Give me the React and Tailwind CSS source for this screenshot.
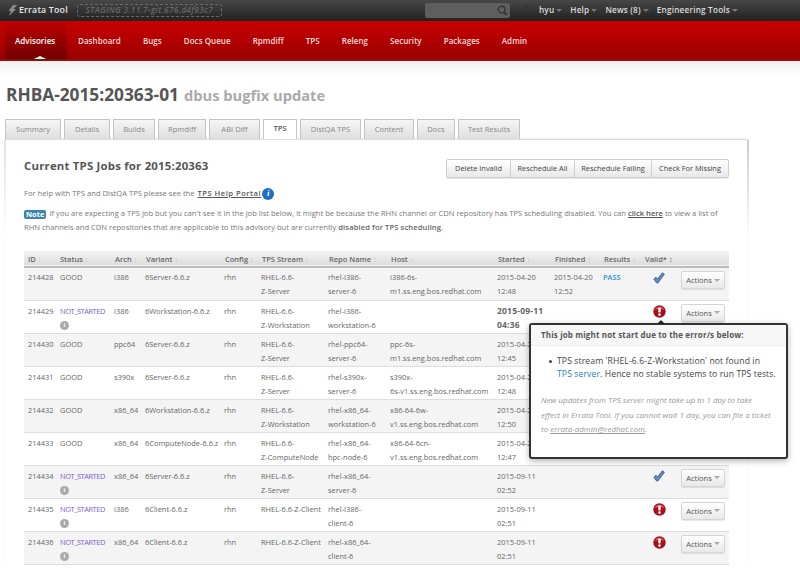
const F = { fontFamily: '"Open Sans", sans-serif' };

const columns = [
  ['ID', 'w-[33px]'], ['Status', 'w-[54px]'], ['Arch', 'w-[31px]'], ['Variant', 'w-[79px]'], ['Config', 'w-[37px]'],
  ['TPS Stream', 'w-[67px]'], ['Repo Name', 'w-[62px]'], ['Host', 'w-[107px]'], ['Started', 'w-[57px]'],
  ['Finished', 'w-[49px]'], ['Results', 'w-[41px]'], ['Valid*', 'w-[35px]'], ['', 'w-[53px]'],
];

const rows = [
  ['214428', 'GOOD', 'i386', '6Server-6.6.z', 'RHEL-6.6-\nZ-Server', 'rhel-i386-\nserver-6', 'i386-6s-\nm1.ss.eng.bos.redhat.com', '2015-04-20\n12:48', '2015-04-20\n12:52', 'PASS', 'ok'],
  ['214429', 'NOT', 'i386', '6Workstation-6.6.z', 'RHEL-6.6-\nZ-Workstation', 'rhel-i386-\nworkstation-6', '', '2015-09-11\n04:36', '', '', 'err', true],
  ['214430', 'GOOD', 'ppc64', '6Server-6.6.z', 'RHEL-6.6-\nZ-Server', 'rhel-ppc64-\nserver-6', 'ppc-6s-\nm1.ss.eng.bos.redhat.com', '2015-04-20\n12:45', '', '', ''],
  ['214431', 'GOOD', 's390x', '6Server-6.6.z', 'RHEL-6.6-\nZ-Server', 'rhel-s390x-\nserver-6', 's390x-\n6s-v1.ss.eng.bos.redhat.com', '2015-04-20\n12:48', '', '', ''],
  ['214432', 'GOOD', 'x86_64', '6Workstation-6.6.z', 'RHEL-6.6-\nZ-Workstation', 'rhel-x86_64-\nworkstation-6', 'x86-64-6w-\nv1.ss.eng.bos.redhat.com', '2015-04-20\n12:50', '', '', ''],
  ['214433', 'GOOD', 'x86_64', '6ComputeNode-6.6.z', 'RHEL-6.6-\nZ-ComputeNode', 'rhel-x86_64-\nhpc-node-6', 'x86-64-6cn-\nv1.ss.eng.bos.redhat.com', '2015-04-20\n12:47', '', '', ''],
  ['214434', 'NOT', 'x86_64', '6Server-6.6.z', 'RHEL-6.6-\nZ-Server', 'rhel-x86_64-\nserver-6', '', '2015-09-11\n02:52', '', '', 'ok'],
  ['214435', 'NOT', 'i386', '6Client-6.6.z', 'RHEL-6.6-Z-Client', 'rhel-i386-\nclient-6', '', '2015-09-11\n02:51', '', '', 'err'],
  ['214436', 'NOT', 'x86_64', '6Client-6.6.z', 'RHEL-6.6-Z-Client', 'rhel-x86_64-\nclient-6', '', '2015-09-11\n02:51', '', '', 'err'],
];

function Caret({ className }) {
  return <span className={'inline-block w-0 h-0 border-x-[3px] border-x-transparent border-t-[3px] align-middle ' + className} />;
}

function Lines({ text }) {
  return text.split('\n').map((l, i) => <div key={i} className="whitespace-nowrap">{l}</div>);
}

function ErrIcon() {
  return (
    <svg width="13" height="13" viewBox="0 0 13 13" className="block">
      <circle cx="6.5" cy="6.5" r="6.2" fill="#a8101c" />
      <path d="M1.5 5 A5.4 5.4 0 0 1 11.5 5 Q6.5 3 1.5 5Z" fill="#d9535c" />
      <rect x="5.3" y="2.4" width="2.4" height="5.2" rx="0.8" fill="#fff" />
      <circle cx="6.5" cy="9.6" r="1.3" fill="#fff" />
    </svg>
  );
}

function OkIcon() {
  return (
    <svg width="12" height="12" viewBox="0 0 12 12" className="block">
      <path d="M0.8 7 L3 5.2 L4.5 7 L9.3 0.8 L11.4 2.2 L5 11 L3.6 11 Z" fill="#5d8cc0" stroke="#2b4f7a" strokeWidth="0.7" strokeLinejoin="round" />
    </svg>
  );
}

function InfoDot() {
  return (
    <span className="mt-[3px] flex h-[9px] w-[9px] items-center justify-center rounded-full bg-[#aaaaaa] text-[6px] font-bold leading-none text-white">i</span>
  );
}

function TopNavItem({ label, active }) {
  return (
    <div className={'flex h-full items-center px-[11px] pt-[2px] text-[8px] font-semibold tracking-[0.05px] text-[#f6dcdc] ' + (active ? 'relative w-[62px] bg-gradient-to-b from-[#bf0000] to-[#720000] pl-[10px] text-white' : '')}>
      {label}
      {active && <span className="absolute bottom-0 left-[29px] h-0 w-0 border-x-[6px] border-b-[3px] border-x-transparent border-b-white" />}
    </div>
  );
}

export default function App() {
  return (
    <div className="relative h-[577px] w-[800px] overflow-hidden bg-white text-[#555555]" style={F}>
      <div className="flex h-[21px] items-center justify-between bg-gradient-to-b from-[#474747] to-[#222222] pl-[8px] pr-[62px]">
        <div className="flex items-center">
          <svg width="9" height="11" viewBox="0 0 9 11"><path d="M5 0 L9 0 L5.5 4 L8 4 L1 11 L3 6 L0.5 6 Z" fill="#8a8a8a" /></svg>
          <span className="ml-[2px] text-[8.8px] font-semibold tracking-[0.2px] text-[#e6e6e6]">Errata Tool</span>
          <span className="ml-[9px] flex h-[13px] w-[145px] items-center justify-center rounded-[3px] border border-dashed border-[#6b6b6b] text-[8.3px] font-semibold italic tracking-[0.3px] text-[#666666]">STAGING 3.11.7-git.676.d4f93c7</span>
        </div>
        <div className="flex items-center">
          <div className="mr-[16px] flex h-[15px] w-[85px] items-center justify-end rounded-[2px] bg-[#5e5e5e] pr-[2px]">
            <svg width="11" height="11" viewBox="0 0 11 11" fill="none" stroke="#353535" strokeWidth="1.4"><circle cx="4.6" cy="4.6" r="3.3" /><path d="M7 7 L10 10" strokeWidth="1.8" /></svg>
          </div>
          <div className="mr-[12px] h-[13px] w-px bg-[#2d2d2d]" />
          {[['hyu', 'mr-[8px]'], ['Help', 'mr-[8px]'], ['News (8)', 'mr-[8px]'], ['Engineering Tools', '']].map(([t, c]) => (
            <span key={t} className={'flex items-center gap-[2px] whitespace-nowrap text-[8.2px] font-semibold tracking-[0.2px] text-[#dddddd] ' + c}>
              {t}<Caret className="border-t-[#777777]" />
            </span>
          ))}
        </div>
      </div>

      <div className="flex h-[40px] border-b-2 border-[#8e1010] bg-gradient-to-b from-[#c80000] to-[#9c0000] pl-[5px]">
        <TopNavItem label="Advisories" active />
        {['Dashboard', 'Bugs', 'Docs Queue', 'Rpmdiff', 'TPS', 'Releng', 'Security', 'Packages', 'Admin'].map((t) => (
          <TopNavItem key={t} label={t} />
        ))}
      </div>
      <div className="h-[14px] bg-gradient-to-b from-[#efefef] to-white" />

      <h1 className="ml-[6px] mt-[6px] flex h-[28px] items-center text-[17.3px] font-bold leading-[28px] text-[#555555]">
        RHBA-2015:20363-01
        <span className="ml-[5px] text-[14.7px] text-[#aaaaaa]">dbus bugfix update</span>
      </h1>

      <div className="ml-[5px] mt-[10px] flex h-[20px] gap-[3px]">
        {[['Summary', 'w-[56px]'], ['Details', 'w-[46px]'], ['Builds', 'w-[42px]'], ['Rpmdiff', 'w-[48px]'], ['ABI Diff', 'w-[51px]'], ['TPS', 'w-[34px]', 1], ['DistQA TPS', 'w-[61px]'], ['Content', 'w-[50px]'], ['Docs', 'w-[38px]'], ['Test Results', 'w-[62px]']].map(([t, w, a]) => (
          <div key={t} className={'relative z-10 flex items-center justify-center border border-[#c4c4c4] text-[7.6px] ' + w + ' ' + (a ? 'border-b-white bg-white font-semibold text-[#555555]' : 'border-b-0 bg-gradient-to-b from-[#f6f6f6] to-[#dedede] text-[#888888]')}>{t}</div>
        ))}
      </div>

      <div className="relative ml-[5px] w-[743px] border-t border-[#dddddd] px-[19px] shadow-[0_-1px_2px_rgba(0,0,0,0.08)]">
        <div className="absolute left-[-1px] top-0 h-[100px] w-[2px] bg-gradient-to-b from-[#e2e2e2] to-white" />
        <div className="absolute right-[-1px] top-0 h-[100px] w-[2px] bg-gradient-to-b from-[#cccccc] to-white" />

        <div className="flex h-[46px] items-start justify-between pt-[17px]">
          <h2 className="text-[11.4px] font-bold leading-[18px] tracking-[0.2px] text-[#555555]">Current TPS Jobs for 2015:20363</h2>
          <div className="mt-[2px] flex h-[19px] rounded-[2px] border border-[#cfcfcf] bg-gradient-to-b from-white to-[#e8e8e8] text-[7.4px] text-[#444444] shadow-[0_1px_1px_rgba(0,0,0,0.1)]">
            {[['Delete Invalid', 'w-[63px]'], ['Reschedule All', 'w-[64px]'], ['Reschedule Failing', 'w-[77px]'], ['Check For Missing', 'w-[77px]']].map(([t, w], i) => (
              <div key={t} className={'flex items-center justify-center whitespace-nowrap ' + w + ' ' + (i ? 'border-l border-[#cfcfcf]' : '')}>{t}</div>
            ))}
          </div>
        </div>

        <p className="mt-[1px] flex h-[14px] items-center text-[7.6px] text-[#777777]">
          For help with TPS and DistQA TPS please see the
          <span className="ml-[3px] font-semibold tracking-[0.5px] text-[#555555] underline">TPS Help Portal</span>
          <span className="ml-px flex h-[12px] w-[12px] items-center justify-center rounded-full bg-[#1f6fc4] text-[9px] font-bold italic text-white" style={{ fontFamily: '"Liberation Serif", serif' }}>i</span>
        </p>

        <div className="mt-[5px] text-[7.6px] leading-[14px] text-[#777777]">
          <div className="whitespace-nowrap">
            <span className="mr-[3px] inline-block h-[9px] rounded-[2px] bg-[#3a87ad] px-[2px] align-[-0.5px] text-[7.5px] font-bold leading-[9px] text-white">Note</span>
            If you are expecting a TPS job but you can't see it in the job list below, it might be because the RHN channel or CDN repository has TPS scheduling disabled. You can{' '}
            <span className="font-semibold text-[#555555] underline">click here</span> to view a list of
          </div>
          <div className="whitespace-nowrap">
            RHN channels and CDN repositories that are applicable to this advisory but are currently{' '}
            <span className="font-semibold tracking-[0.1px] text-[#666666]">disabled for TPS scheduling</span>.
          </div>
        </div>

        <table className="mt-[17px] w-[705px] table-fixed border-collapse text-[7.45px] leading-[14px] text-[#666666]">
          <colgroup>{columns.map(([h, w]) => <col key={h} className={w} />)}</colgroup>
          <thead>
            <tr className="h-[16px] border-b-2 border-b-[#bbbbbb] bg-gradient-to-b from-[#f4f4f4] to-[#dddddd]">
              {columns.map(([h]) => (
                <th key={h} className={'whitespace-nowrap text-left text-[7.5px] font-semibold text-[#666666] ' + (h === 'Status' ? 'pl-[3px]' : 'pl-[4px]')}>
                  {h}{h && <span className={'ml-[2px] ' + (h === 'Valid*' ? 'text-[#666666]' : 'text-[#cccccc]')}>↕</span>}
                </th>
              ))}
            </tr>
          </thead>
          <tbody>
            {rows.map((r, i) => {
              const pt = i === 0 ? 'pt-[2px]' : 'pt-[3px]';
              const covered = i >= 2 && i <= 5;
              return (
                <tr key={r[0]} className={'h-[33px] border-b border-[#dddddd] align-top ' + (i % 2 === 0 ? 'bg-[#f4f4f4]' : 'bg-white')}>
                  <td className={'pl-[4px] ' + pt}>{r[0]}</td>
                  <td className={'pl-[3px] ' + pt}>
                    {r[1] === 'NOT' ? (<><div className="whitespace-nowrap tracking-[-0.45px] text-[#7d5fd0]">NOT_STARTED</div><InfoDot /></>) : r[1]}
                  </td>
                  <td className={'whitespace-nowrap pl-[3px] ' + pt}>{r[2]}</td>
                  <td className={'whitespace-nowrap pl-[3px] ' + pt}>{r[3]}</td>
                  <td className={'pl-[3px] ' + pt}>rhn</td>
                  <td className={'pl-[3px] ' + pt}><Lines text={r[4]} /></td>
                  <td className={'pl-[3px] ' + pt}><Lines text={r[5]} /></td>
                  <td className={'pl-[3px] ' + pt}><Lines text={r[6]} /></td>
                  <td className={'pl-[3px] ' + pt + ' ' + (r[11] ? 'text-[8.5px] font-bold tracking-[0.2px]' : '')}><Lines text={r[7]} /></td>
                  <td className={'pl-[3px] ' + pt}><Lines text={r[8]} /></td>
                  <td className={'pl-[3px] font-semibold text-[#2a8fd0] ' + pt}>{r[9]}</td>
                  <td className="pl-[12px] pt-[4px]">{r[10] === 'ok' && <OkIcon />}{r[10] === 'err' && <ErrIcon />}</td>
                  <td className="pl-[5px] pt-[3px]">
                    {!covered && (
                      <div className="flex h-[18px] w-[44px] items-center justify-center gap-[2px] rounded-[2px] border border-[#d5d5d5] bg-gradient-to-b from-white to-[#e8e8e8] text-[7.5px] text-[#555555] shadow-[0_1px_1px_rgba(0,0,0,0.1)]">
                        Actions<Caret className="border-t-[#aaaaaa]" />
                      </div>
                    )}
                  </td>
                </tr>
              );
            })}
          </tbody>
        </table>
      </div>

      <div className="absolute left-[529px] top-[323px] z-20 h-[136px] w-[259px] rounded-[3px] border-2 border-[#333333] bg-white shadow-[0_2px_6px_rgba(0,0,0,0.3)]">
        <span className="absolute left-[126px] top-[-5px] h-0 w-0 border-x-[4px] border-b-[4px] border-x-transparent border-b-[#222222]" />
        <div className="flex h-[21px] items-center border-b border-[#eeeeee] bg-[#f7f7f7] pl-[10px] text-[8px] font-bold tracking-[0.15px] text-[#555555]">This job might not start due to the error/s below:</div>
        <div className="ml-[26px] mt-[9px] text-[8.65px] leading-[13px] tracking-[0.1px] text-[#444444]">
          <div className="relative whitespace-nowrap">
            <span className="absolute left-[-8px] top-[5px] h-[3px] w-[3px] rounded-full bg-[#444444]" />
            TPS stream 'RHEL-6.6-Z-Workstation' not found in
          </div>
          <div className="whitespace-nowrap"><span className="text-[#1f7fc0]">TPS server</span>. Hence no stable systems to run TPS tests.</div>
        </div>
        <div className="ml-[10px] mt-[12px] text-[8px] italic leading-[14.5px] text-[#999999]">
          <div className="whitespace-nowrap">New updates from TPS server might take up to 1 day to take</div>
          <div className="whitespace-nowrap">effect in Errata Tool. If you cannot wait 1 day, you can file a ticket</div>
          <div className="whitespace-nowrap">to <span className="underline">errata-admin@redhat.com</span>.</div>
        </div>
      </div>
    </div>
  );
}
